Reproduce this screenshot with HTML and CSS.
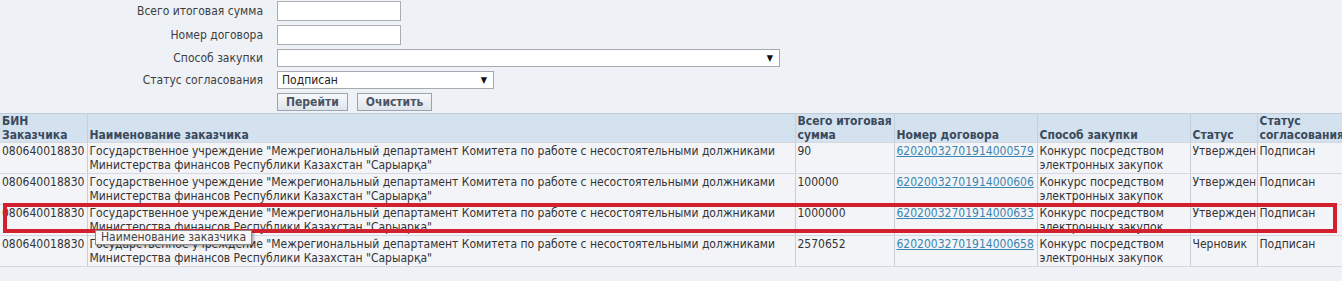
FILE: index.html
```html
<!DOCTYPE html>
<html lang="ru">
<head>
<meta charset="utf-8">
<link rel="stylesheet" href="styles.css">
</head>
<body>
<div class="page">
  <form class="filters">
    <label class="lbl">Всего итоговая сумма</label>
    <div class="field"><input class="inp" type="text"></div>
    <label class="lbl">Номер договора</label>
    <div class="field"><input class="inp" type="text"></div>
    <label class="lbl">Способ закупки</label>
    <div class="field"><div class="sel sel-wide"><span class="sel-text"></span><span class="arrow">▼</span></div></div>
    <label class="lbl">Статус согласования</label>
    <div class="field"><div class="sel sel-narrow"><span class="sel-text">Подписан</span><span class="arrow">▼</span></div></div>
    <span></span>
    <div class="field btns"><button type="button" class="btn">Перейти</button><button type="button" class="btn">Очистить</button></div>
  </form>

  <div class="tablewrap">
    <table class="grid">
      <colgroup>
        <col class="c1"><col class="c2"><col class="c3"><col class="c4"><col class="c5"><col class="c6"><col class="c7">
      </colgroup>
      <thead>
        <tr>
          <th>БИН<br>Заказчика</th>
          <th>Наименование заказчика</th>
          <th>Всего итоговая<br>сумма</th>
          <th>Номер договора</th>
          <th>Способ закупки</th>
          <th>Статус</th>
          <th>Статус<br>согласования</th>
        </tr>
      </thead>
      <tbody>
        <tr>
          <td>080640018830</td>
          <td>Государственное учреждение "Межрегиональный департамент Комитета по работе с несостоятельными должниками Министерства финансов Республики Казахстан "Сарыарқа"</td>
          <td>90</td>
          <td><a href="#">62020032701914000579</a></td>
          <td>Конкурс посредством электронных закупок</td>
          <td>Утвержден</td>
          <td>Подписан</td>
        </tr>
        <tr>
          <td>080640018830</td>
          <td>Государственное учреждение "Межрегиональный департамент Комитета по работе с несостоятельными должниками Министерства финансов Республики Казахстан "Сарыарқа"</td>
          <td>100000</td>
          <td><a href="#">62020032701914000606</a></td>
          <td>Конкурс посредством электронных закупок</td>
          <td>Утвержден</td>
          <td>Подписан</td>
        </tr>
        <tr>
          <td>080640018830</td>
          <td>Государственное учреждение "Межрегиональный департамент Комитета по работе с несостоятельными должниками Министерства финансов Республики Казахстан "Сарыарқа"</td>
          <td>1000000</td>
          <td><a href="#">62020032701914000633</a></td>
          <td>Конкурс посредством электронных закупок</td>
          <td>Утвержден</td>
          <td>Подписан</td>
        </tr>
        <tr>
          <td>080640018830</td>
          <td>Государственное учреждение "Межрегиональный департамент Комитета по работе с несостоятельными должниками Министерства финансов Республики Казахстан "Сарыарқа"</td>
          <td>2570652</td>
          <td><a href="#">62020032701914000658</a></td>
          <td>Конкурс посредством электронных закупок</td>
          <td>Черновик</td>
          <td>Подписан</td>
        </tr>
      </tbody>
    </table>
    <div class="highlight"></div>
    <div class="tooltip">Наименование заказчика</div>
  </div>
</div>
</body>
</html>
```
FILE: styles.css
```css
html, body {
  margin: 0;
  padding: 0;
  background: #eef1f6;
}
body {
  font-family: "DejaVu Sans Condensed", "DejaVu Sans", sans-serif;
  font-stretch: condensed;
  font-size: 12px;
  color: #333;
  width: 1342px;
  height: 281px;
  overflow: hidden;
}
.page {
  padding-top: 1px;
}
.filters {
  display: grid;
  grid-template-columns: 263px 1fr;
  column-gap: 14px;
  row-gap: 4px;
  align-items: center;
  margin: 0;
}
.lbl {
  text-align: right;
  color: #3d3d3d;
  font-size: 12px;
  line-height: 14px;
}
.field {
  display: flex;
  align-items: center;
}
.inp {
  width: 124px;
  height: 20px;
  box-sizing: border-box;
  border: 1px solid #a9adb5;
  background: #fff;
  margin: 0;
  padding: 0 4px;
}
.sel {
  height: 18px;
  box-sizing: border-box;
  border: 1px solid #a5a9b0;
  background: #fff;
  display: flex;
  align-items: center;
  justify-content: space-between;
  padding: 0 6px 0 4px;
  color: #222;
}
.sel-wide { width: 503px; }
.sel-narrow { width: 217px; }
.arrow {
  font-size: 9px;
  color: #111;
}
.btns {
  gap: 9px;
}
.btn {
  font-family: inherit;
  font-stretch: condensed;
  font-weight: bold;
  font-size: 12px;
  color: #4a5563;
  height: 18px;
  margin: 0;
  padding: 0 8px;
  border: 1px solid #9aa4b0;
  background: linear-gradient(#f6f8fb, #dfe5ec);
  line-height: 14px;
}
.tablewrap {
  position: relative;
  margin-top: 2px;
}
.grid {
  border-collapse: collapse;
  table-layout: fixed;
  width: 1342px;
}
.c1 { width: 87px; }
.c2 { width: 708px; }
.c3 { width: 99px; }
.c4 { width: 143px; }
.c5 { width: 153px; }
.c6 { width: 67px; }
.c7 { width: 85px; }
.grid th {
  background: #d4e2ef;
  color: #3a4a5c;
  font-weight: bold;
  text-align: left;
  vertical-align: bottom;
  padding: 0 2px 0 2px;
  line-height: 14px;
  border-left: 1px solid #c5d0dc;
  border-top: 1px solid #c0ccd8;
  white-space: nowrap;
  overflow: hidden;
}
.grid th:first-child { border-left: none; }
.grid td {
  background: #f3f4f8;
  vertical-align: top;
  padding: 1px 2px 1px 2px;
  height: 28px;
  line-height: 14px;
  border-left: 1px solid #c9cdd5;
  border-top: 1px solid #d5d8de;
  border-bottom: 1px solid #d5d8de;
  color: #333;
  overflow: hidden;
}
.grid td:first-child { border-left: none; }
.grid td a {
  color: #3a86b0;
  text-decoration: underline;
}
.highlight {
  position: absolute;
  left: 3px;
  top: 90px;
  width: 1334px;
  height: 30px;
  box-sizing: border-box;
  border: 4px solid #d2202f;
  pointer-events: none;
}
.tooltip {
  position: absolute;
  left: 95px;
  top: 117px;
  background: #f7f7f7;
  border: 1px solid #8c8c8c;
  box-shadow: 2px 2px 2px rgba(0,0,0,0.25);
  padding: 0 5px;
  line-height: 13px;
  font-size: 12px;
  color: #444;
}
```
